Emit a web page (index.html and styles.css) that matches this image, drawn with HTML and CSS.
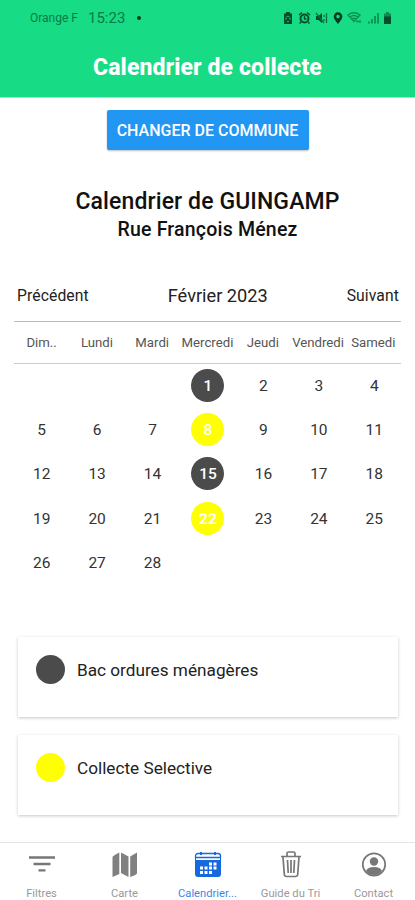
FILE: index.html
```
<!DOCTYPE html>
<html lang="fr">
<head>
  <meta charset="UTF-8" />
  <meta name="viewport" content="width=device-width, initial-scale=1.0"/>
  <title>Calendrier de collecte</title>
  <link rel="stylesheet" href="styles.css">
</head>
<body>
  <header>
    <div class="status">
      <span class="carrier">Orange F</span>
      <span class="clock">15:23</span>
      <span class="dot"></span>
      <div class="status-icons">
        <svg width="10" height="12" viewBox="0 0 10 12"><path d="M3 0h4v1.500h2V12H1V1.500h2z" fill="#064d2c"/><path d="M3 8V5.500l2-1.500 2 1.500V8M4 9.500h2" fill="none" stroke="#12b76a"/></svg>
        <svg width="13" height="12" viewBox="0 0 13 12"><circle cx="6.500" cy="6.500" r="4" fill="none" stroke="#064d2c" stroke-width="2"/><path d="M1 3l3-2.500M12 3L9 .5M3 10l-1.500 1.500M10 10l1.500 1.500M6.500 4v3h2" fill="none" stroke="#064d2c" stroke-width="1.400"/></svg>
        <svg width="13" height="12" viewBox="0 0 13 12"><path d="M1 4h2.500L7 1v10L3.500 8H1z" fill="#064d2c"/><path d="M1 1l8 10M9 3v2M9 7v2M11.500 1v10" fill="none" stroke="#08703f" stroke-width="1.300"/></svg>
        <svg width="10" height="12" viewBox="0 0 10 12"><path fill-rule="evenodd" d="M5 .3a4.300 4.300 0 0 1 4.300 4.300C9.300 7.500 5 12 5 12S.7 7.500.7 4.600A4.300 4.300 0 0 1 5 .3zm0 2.500a1.800 1.800 0 1 0 0 3.600 1.800 1.800 0 0 0 0-3.600z" fill="#033b20"/></svg>
        <svg width="16" height="12" viewBox="0 0 16 12"><path d="M1 3q6-4.500 12 0L7 9.500zM3 5q4-3 8 0M5 7q2-1.500 4 0M9 9.500h3M13 8v3" fill="none" stroke="#0a8f51" stroke-width="1.300"/></svg>
        <svg width="11" height="12" viewBox="0 0 11 12"><path d="M1 11.500V9.500M4 11.500V7M7 11.500V4M10 11.500V1" stroke="#0a8049" stroke-width="1.500"/></svg>
        <svg width="9" height="12" viewBox="0 0 9 12"><path d="M3 0h3v1.500h2V5H1V1.500h2z" fill="#0a8f51"/><path d="M1 4.500h7V12H1z" fill="#064d2c"/></svg>
      </div>
    </div>
    <h1>Calendrier de collecte</h1>
  </header>

  <main>
    <button class="change">CHANGER DE COMMUNE</button>
    <h2>Calendrier de GUINGAMP</h2>
    <h3>Rue François Ménez</h3>

    <div class="month-nav">
      <span class="prev">Précédent</span>
      <span class="month">Février 2023</span>
      <span class="next">Suivant</span>
    </div>

    <div class="weekdays">
      <span>Dim..</span>
      <span>Lundi</span>
      <span>Mardi</span>
      <span>Mercredi</span>
      <span>Jeudi</span>
      <span>Vendredi</span>
      <span>Samedi</span>
    </div>

    <div class="days">
      <span class="first dark">1</span><span>2</span><span>3</span><span>4</span>
      <span>5</span><span>6</span><span>7</span><span class="yellow">8</span><span>9</span><span>10</span><span>11</span>
      <span>12</span><span>13</span><span>14</span><span class="dark">15</span><span>16</span><span>17</span><span>18</span>
      <span>19</span><span>20</span><span>21</span><span class="yellow strong">22</span><span>23</span><span>24</span><span>25</span>
      <span>26</span><span>27</span><span>28</span>
    </div>

    <div class="card">
      <span class="bullet dark"></span>
      <span class="waste">Bac ordures ménagères</span>
    </div>
    <div class="card">
      <span class="bullet yellow"></span>
      <span class="waste">Collecte Selective</span>
    </div>
  </main>

  <footer>
    <a class="tab">
      <svg width="28" height="28" viewBox="0 0 28 28"><path d="M1 6.500h26M5.500 13h17M10.500 19.300h7" stroke="#777" stroke-width="2.300"/></svg>
      <span>Filtres</span>
    </a>
    <a class="tab">
      <svg width="28" height="28" viewBox="0 0 28 28"><path d="M1.500 6Q2 4.500 8.300 1.500v21.500l-6.800 3zM10 1.500l7.500 4v20.500l-7.500-4zM19.200 5.500L26 1.500v21q-1 1.500-6.800 3.500z" fill="#808080"/></svg>
      <span>Carte</span>
    </a>
    <a class="tab active">
      <svg width="28" height="28" viewBox="0 0 28 28"><path d="M4 2.500h20a2.500 2.500 0 0 1 2.500 2.500v1.500h-25V5A2.500 2.500 0 0 1 4 2.500z" fill="#fff" stroke="#1668df" stroke-width="1.300"/><path d="M7 1v3M21 1v3" stroke="#1668df" stroke-width="2"/><path d="M1 9h26v14a3 3 0 0 1-3 3H4a3 3 0 0 1-3-3z" fill="#1668df"/><path d="M1.500 5v5M26.500 5v5" stroke="#1668df"/><path d="M15 11.500h3v3h-3zM19.500 11.500h3v3h-3zM6 15.500h3v3H6zM10.500 15.500h3v3h-3zM15 15.500h3v3h-3zM19.500 15.500h3v3h-3zM6 20h3v3H6zM10.500 20h3v3h-3zM15 20h3v3h-3z" fill="#fff"/></svg>
      <span>Calendrier...</span>
    </a>
    <a class="tab">
      <svg width="28" height="28" viewBox="0 0 28 28"><path d="M4 5.500h20M10 5V2.500Q10 1 11.500 1h5Q18 1 18 2.500V5M6 6l1.300 17.500q.2 2 2.200 2h9q2 0 2.200-2L22 6M10.500 9l.7 13M14 9v13M17.500 9l-.7 13" fill="none" stroke="#777" stroke-width="1.700"/></svg>
      <span>Guide du Tri</span>
    </a>
    <a class="tab">
      <svg width="28" height="28" viewBox="0 0 28 28"><circle cx="14" cy="13.500" r="11.200" fill="none" stroke="#777" stroke-width="1.700"/><circle cx="14" cy="10.500" r="4.200" fill="#777"/><path d="M6 20q1.500-4 8-4t8 4q-3 4-8 4t-8-4z" fill="#777"/></svg>
      <span>Contact</span>
    </a>
  </footer>
</body>
</html>
```

FILE: styles.css
```
* {
  box-sizing: border-box;
}

body {
  font-family: Roboto, sans-serif;
  background: #fff;
  margin: 0;
  height: 900px;
  color: #222;
  display: flex;
  flex-direction: column;
  overflow: hidden;
}

header {
  background: #17dc85;
  height: 98px;
  border-bottom: 1px solid #8beec2;
}

.status {
  display: flex;
  align-items: center;
  height: 36px;
  padding: 0 23px 0 30px;
  color: #087a45;
}

.carrier {
  width: 58px;
  font-size: 12px;
}

.clock {
  width: 49px;
  font-size: 15px;
}

.dot {
  width: 4px;
  height: 4px;
  border-radius: 50%;
  background: #033b20;
}

.status-icons {
  display: flex;
  align-items: center;
  gap: 4.5px;
  margin-left: auto;
}

h1 {
  margin: 18px 0 0;
  font-size: 23px;
  line-height: 27px;
  font-weight: 800;
  letter-spacing: 0.1px;
  color: #fff;
  text-align: center;
}

main {
  flex: 1;
  display: flex;
  flex-direction: column;
}

.change {
  align-self: center;
  width: 202px;
  height: 40px;
  margin-top: 12px;
  padding: 0;
  border: none;
  border-radius: 2px;
  background: #2196f3;
  box-shadow: 0 1px 2px rgba(0,0,0,0.25);
  color: #fff;
  font-family: inherit;
  font-size: 16px;
  font-weight: 500;
}

h2 {
  margin: 37px 0 0;
  font-size: 23px;
  line-height: 29px;
  font-weight: 500;
  letter-spacing: 0.1px;
  text-align: center;
  color: #111;
}

h3 {
  margin: 2px 0 0;
  font-size: 19.5px;
  line-height: 24px;
  font-weight: 500;
  letter-spacing: 0.2px;
  text-align: center;
  color: #111;
}

.month-nav {
  display: flex;
  align-items: center;
  justify-content: space-between;
  height: 52px;
  margin: 27px 16px 0 17px;
  font-size: 15.7px;
}

.month {
  font-size: 18.2px;
}

.prev, .next {
  letter-spacing: 0.1px;
}

.weekdays {
  display: grid;
  grid-template-columns: repeat(7, 1fr);
  align-items: center;
  justify-items: center;
  height: 43px;
  margin: 0 14px;
  border-top: 1px solid #bbb;
  border-bottom: 1px solid #ccc;
  font-size: 13.2px;
  color: #555;
}

.days {
  display: grid;
  grid-template-columns: repeat(7, 1fr);
  grid-auto-rows: 44.4px;
  align-items: center;
  justify-items: center;
  margin: -1px 13px 0 14px;
  font-size: 15.5px;
  color: #333;
}

.days span {
  width: 33px;
  height: 33px;
  line-height: 34px;
  border-radius: 50%;
  text-align: center;
}

.days .first {
  grid-column: 4;
}

.dark {
  background: #4b4b4b;
}

.yellow {
  background: #ff0;
}

.days .dark, .days .yellow {
  color: #fff;
  font-weight: 500;
}

.days .strong {
  font-weight: 700;
}

.card {
  display: flex;
  height: 80px;
  margin: 0 17px 18px 18px;
  padding: 18px;
  background: #fff;
  box-shadow: 0 1px 3px rgba(0,0,0,0.22);
}

.days + .card {
  margin-top: 52px;
}

.bullet {
  width: 29px;
  height: 29px;
  margin-right: 12px;
  border-radius: 50%;
}

.waste {
  line-height: 30px;
  font-size: 17.2px;
}

footer {
  display: grid;
  grid-template-columns: repeat(5, 1fr);
  height: 58px;
  border-top: 1px solid #e4e4e4;
  background: #fff;
}

.tab {
  display: flex;
  flex-direction: column;
  align-items: center;
  padding-top: 8px;
  color: #999;
  font-size: 11.2px;
}

.tab span {
  margin-top: 8px;
  line-height: 14px;
}

.active {
  color: #3d86e8;
}
```
